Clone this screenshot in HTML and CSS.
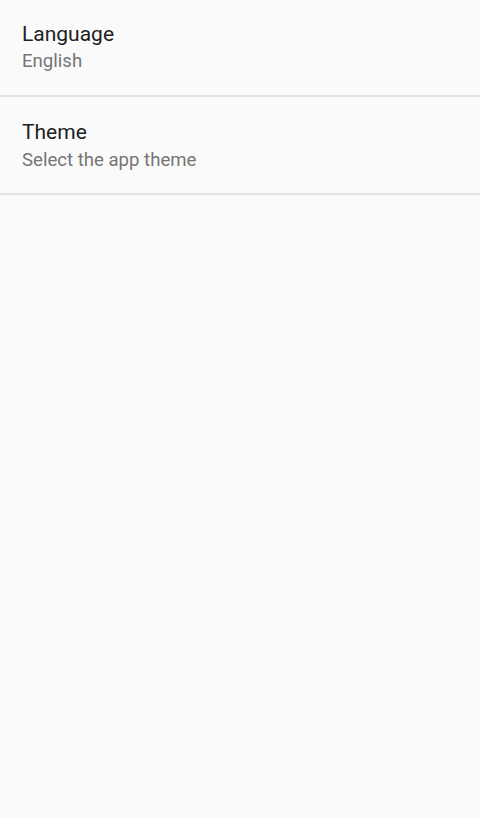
FILE: index.html
```html
<!DOCTYPE html>
<html lang="en">
<head>
<meta charset="utf-8">
<title>Settings</title>
<link rel="stylesheet" href="styles.css">
</head>
<body>
<div class="pref-list">
  <div class="pref">
    <div class="pref-title">Language</div>
    <div class="pref-summary">English</div>
  </div>
  <div class="pref">
    <div class="pref-title">Theme</div>
    <div class="pref-summary">Select the app theme</div>
  </div>
</div>
</body>
</html>
```
FILE: styles.css
```css
html, body {
  margin: 0;
  padding: 0;
  background: #fafafa;
  height: 100%;
}
body {
  font-family: Roboto, "Noto Sans", sans-serif;
}
.pref-list {
  display: flex;
  flex-direction: column;
}
.pref {
  display: flex;
  flex-direction: column;
  padding: 22px 22px 23px;
  border-bottom: 2px solid #e4e4e4;
}
.pref + .pref {
  padding-top: 23px;
  padding-bottom: 22px;
}
.pref-title {
  font-size: 21px;
  line-height: 25px;
  color: #212121;
}
.pref-summary {
  margin-top: 3px;
  font-size: 18.6px;
  line-height: 22px;
  color: #757575;
}
.pref + .pref .pref-summary {
  margin-top: 4px;
}
```
